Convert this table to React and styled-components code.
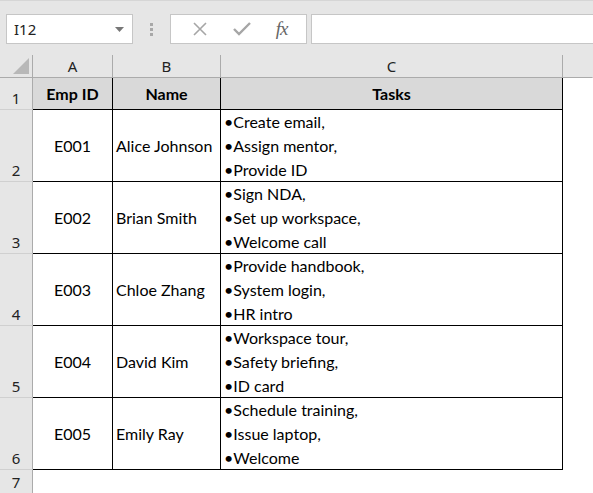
import React from "react";
import styled, { createGlobalStyle } from "styled-components";

const GlobalStyle = createGlobalStyle`
  html, body {
    margin: 0;
    padding: 0;
    background: #ffffff;
    overflow: hidden;
  }
  * {
    box-sizing: border-box;
  }
`;

const Page = styled.div`
  width: 593px;
  height: 493px;
  background: #ffffff;
  font-family: Lato, "Liberation Sans", sans-serif;
  color: #000;
  overflow: hidden;
`;

const Toolbar = styled.div`
  display: flex;
  align-items: center;
  height: 55px;
  padding: 0 0 0 6px;
  background: #e6e6e6;
  border-top: 1px solid #d6d6d6;
`;

const NameBox = styled.div`
  display: flex;
  align-items: center;
  justify-content: space-between;
  width: 127px;
  height: 30px;
  margin-top: 2px;
  padding: 0 8px 0 7px;
  background: #fff;
  border: 1px solid #c6c6c6;
  font-family: "Noto Sans", "Open Sans", sans-serif;
  font-size: 15px;
  color: #222;
`;

const Grip = styled.div`
  display: flex;
  flex-direction: column;
  gap: 2px;
  margin: 2px 17px 0 17px;
`;

const GripDot = styled.span`
  width: 3px;
  height: 3px;
  background: #a8a8a8;
`;

const FxPanel = styled.div`
  display: flex;
  align-items: center;
  justify-content: space-around;
  width: 137px;
  height: 30px;
  margin-top: 2px;
  padding: 0 6px 0 8px;
  background: #fff;
  border: 1px solid #c6c6c6;
`;

const Fx = styled.span`
  font-family: "Liberation Serif", serif;
  font-style: italic;
  font-size: 19px;
  color: #666;
  letter-spacing: -1px;
`;

const Formula = styled.div`
  flex: 1;
  height: 30px;
  margin: 2px 0 0 4px;
  background: #fff;
  border: 1px solid #c6c6c6;
  border-right: none;
`;

const Sheet = styled.div`
  display: grid;
  grid-template-columns: 33px 80px 108px 342px 1fr;
  grid-template-rows: 23px 32px repeat(5, 72px) 24px;
`;

const Corner = styled.div`
  position: relative;
  background: #e6e6e6;
  border-right: 1px solid #ababab;
  border-bottom: 1px solid #ababab;
`;

const CornerMark = styled.div`
  position: absolute;
  right: 3px;
  bottom: 3px;
  width: 0;
  height: 0;
  border-left: 16px solid transparent;
  border-bottom: 16px solid #b8b8b8;
`;

const ColHead = styled.div`
  display: flex;
  align-items: center;
  justify-content: center;
  background: #e6e6e6;
  border-right: 1px solid ${(p) => (p.last ? "transparent" : "#ababab")};
  border-bottom: 1px solid #ababab;
  font-family: "Noto Sans", "Open Sans", sans-serif;
  font-size: 15px;
  color: #222;
`;

const RowHead = styled.div`
  display: flex;
  align-items: flex-end;
  justify-content: center;
  padding-bottom: 1px;
  background: #e6e6e6;
  border-right: 1px solid #ababab;
  border-bottom: 1px solid #d0d0d0;
  font-family: "Noto Sans", "Open Sans", sans-serif;
  font-size: 15px;
  line-height: 20px;
  color: #222;
`;

const Cell = styled.div`
  display: flex;
  flex-direction: column;
  justify-content: ${(p) => (p.top ? "flex-start" : "center")};
  align-items: ${(p) => (p.center ? "center" : "flex-start")};
  padding: ${(p) => (p.top ? "0 3px" : "0 3px")};
  background: ${(p) => (p.head ? "#d9d9d9" : "#fff")};
  border-right: 1px solid #000;
  border-bottom: 1px solid #000;
  font-size: 16px;
  font-weight: ${(p) => (p.head ? 700 : 400)};
  line-height: 24px;
  white-space: nowrap;
`;

const Blank = styled.div`
  background: #fff;
`;

const rows = [
  { id: "E001", name: "Alice Johnson", tasks: ["Create email,", "Assign mentor,", "Provide ID"] },
  { id: "E002", name: "Brian Smith", tasks: ["Sign NDA,", "Set up workspace,", "Welcome call"] },
  { id: "E003", name: "Chloe Zhang", tasks: ["Provide handbook,", "System login,", "HR intro"] },
  { id: "E004", name: "David Kim", tasks: ["Workspace tour,", "Safety briefing,", "ID card"] },
  { id: "E005", name: "Emily Ray", tasks: ["Schedule training,", "Issue laptop,", "Welcome"] },
];

const App = () => {
  return (
    <Page>
      <GlobalStyle />
      <Toolbar>
        <NameBox>
          I12
          <svg width="9" height="5" viewBox="0 0 9 5">
            <path d="M0 0 L9 0 L4.5 5 Z" fill="#777" />
          </svg>
        </NameBox>
        <Grip>
          <GripDot />
          <GripDot />
          <GripDot />
        </Grip>
        <FxPanel>
          <svg width="16" height="16" viewBox="0 0 16 16">
            <path d="M2 2 L14 14 M14 2 L2 14" stroke="#a6a6a6" strokeWidth="1.6" />
          </svg>
          <svg width="18" height="16" viewBox="0 0 18 16">
            <path d="M1 8 L6 13 L17 2" stroke="#a6a6a6" strokeWidth="2.4" fill="none" />
          </svg>
          <Fx>fx</Fx>
        </FxPanel>
        <Formula />
      </Toolbar>
      <Sheet>
        <Corner>
          <CornerMark />
        </Corner>
        <ColHead>A</ColHead>
        <ColHead>B</ColHead>
        <ColHead>C</ColHead>
        <ColHead last />

        <RowHead>1</RowHead>
        <Cell head center>Emp ID</Cell>
        <Cell head center>Name</Cell>
        <Cell head center>Tasks</Cell>
        <Blank />

        {rows.map((r, i) => (
          <React.Fragment key={r.id}>
            <RowHead>{i + 2}</RowHead>
            <Cell center>{r.id}</Cell>
            <Cell>{r.name}</Cell>
            <Cell top>
              {r.tasks.map((t) => (
                <span key={t}>•{t}</span>
              ))}
            </Cell>
            <Blank />
          </React.Fragment>
        ))}

        <RowHead>7</RowHead>
        <Blank />
        <Blank />
        <Blank />
        <Blank />
      </Sheet>
    </Page>
  );
};

export default App;
